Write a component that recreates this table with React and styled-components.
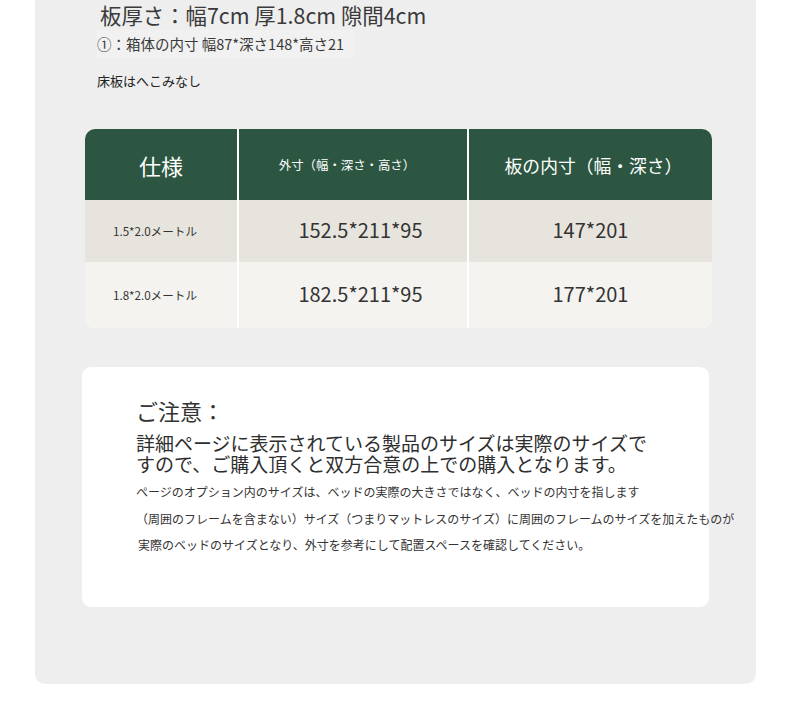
import React from "react";
import styled, { createGlobalStyle } from "styled-components";

const Global = createGlobalStyle`
  html, body { margin: 0; padding: 0; background: #ffffff; }
  body { font-family: "Noto Sans CJK JP", "Noto Sans", sans-serif; color: #333; }
`;

const Panel = styled.div`
  margin-left: 35px;
  width: 721px;
  height: 684px;
  background: #eeeeee;
  border-radius: 0 0 10px 10px;
  box-sizing: border-box;
  display: flex;
  flex-direction: column;
`;

const Title = styled.div`
  margin-left: 65px;
  font-size: 21.4px;
  line-height: 30px;
  color: #3a3a3a;
  white-space: nowrap;
`;

const SubLine = styled.div`
  margin-left: ${(p) => p.$indent}px;
  margin-top: ${(p) => p.$top}px;
  font-size: ${(p) => p.$size}px;
  line-height: ${(p) => p.$lh}px;
  color: ${(p) => p.$color || "#3a3a3a"};
  white-space: nowrap;
  align-self: flex-start;
  padding-right: 10px;
  background: ${(p) => p.$bg || "transparent"};
`;

const Table = styled.div`
  margin-left: 50px;
  margin-top: ${(p) => p.$top}px;
  width: 627px;
  display: grid;
  grid-template-columns: 152px 228px 243px;
  grid-template-rows: 71px 62px 66px;
  column-gap: 2px;
  background: #ffffff;
  border-radius: 10px;
  overflow: hidden;
`;

const HeadCell = styled.div`
  background: #2c5641;
  color: #ffffff;
  display: flex;
  align-items: center;
  justify-content: center;
  font-size: ${(p) => p.$size}px;
  padding: ${(p) => p.$pad || "0"};
  white-space: nowrap;
`;

const Cell = styled.div`
  background: ${(p) => (p.$alt ? "#f4f3f0" : "#e7e4de")};
  color: #333333;
  display: flex;
  align-items: center;
  justify-content: center;
  font-size: ${(p) => p.$size}px;
  padding: ${(p) => p.$pad || "0"};
  white-space: nowrap;
`;

const Card = styled.div`
  margin-left: 47px;
  margin-top: 39px;
  width: 627px;
  height: 240px;
  box-sizing: border-box;
  background: #ffffff;
  border-radius: 9px;
  padding: 28px 0 0 54px;
  display: flex;
  flex-direction: column;
  overflow: visible;
`;

const NoticeTitle = styled.div`
  font-size: 22px;
  line-height: 30px;
  color: #333;
`;

const NoticeLead = styled.div`
  margin-top: 7px;
  font-size: 19px;
  line-height: 21px;
  color: #2e2e2e;
  white-space: nowrap;
`;

const NoticeNote = styled.div`
  margin-top: ${(p) => p.$top || 0}px;
  padding-left: ${(p) => p.$indent || 0}px;
  font-size: 12px;
  line-height: 26.5px;
  color: #333;
  white-space: nowrap;
`;

const rows = [
  { spec: "1.5*2.0メートル", outer: "152.5*211*95", inner: "147*201" },
  { spec: "1.8*2.0メートル", outer: "182.5*211*95", inner: "177*201" },
];

export default function App() {
  return (
    <>
      <Global />
      <Panel>
        <Title>板厚さ：幅7cm 厚1.8cm 隙間4cm</Title>
        <SubLine $indent={62} $top={0} $size={14.5} $lh={28} $bg="#f1f1f1">
          ①：箱体の内寸 幅87*深さ148*高さ21
        </SubLine>
        <SubLine $indent={62} $top={13} $size={13} $lh={20} $color="#222">
          床板はへこみなし
        </SubLine>
        <Table $top={38}>
          <HeadCell $size={22}>仕様</HeadCell>
          <HeadCell $size={12.4} $pad="0 12px 0 0">外寸（幅・深さ・高さ）</HeadCell>
          <HeadCell $size={17.8} $pad="0 0 0 6px">板の内寸（幅・深さ）</HeadCell>
          {rows.map((r, i) => (
            <React.Fragment key={r.spec}>
              <Cell $alt={i === 1} $size={11.6} $pad="0 12px 0 0">{r.spec}</Cell>
              <Cell $alt={i === 1} $size={20} $pad="0 0 4px 15px">{r.outer}</Cell>
              <Cell $alt={i === 1} $size={20} $pad="0 0 4px 0">{r.inner}</Cell>
            </React.Fragment>
          ))}
        </Table>
        <Card>
          <NoticeTitle>ご注意：</NoticeTitle>
          <NoticeLead>
            詳細ページに表示されている製品のサイズは実際のサイズで
            <br />
            すので、ご購入頂くと双方合意の上での購入となります。
          </NoticeLead>
          <NoticeNote $top={5}>ページのオプション内のサイズは、ベッドの実際の大きさではなく、ベッドの内寸を指します</NoticeNote>
          <NoticeNote>（周囲のフレームを含まない）サイズ（つまりマットレスのサイズ）に周囲のフレームのサイズを加えたものが</NoticeNote>
          <NoticeNote $indent={2}>実際のベッドのサイズとなり、外寸を参考にして配置スペースを確認してください。</NoticeNote>
        </Card>
      </Panel>
    </>
  );
}
